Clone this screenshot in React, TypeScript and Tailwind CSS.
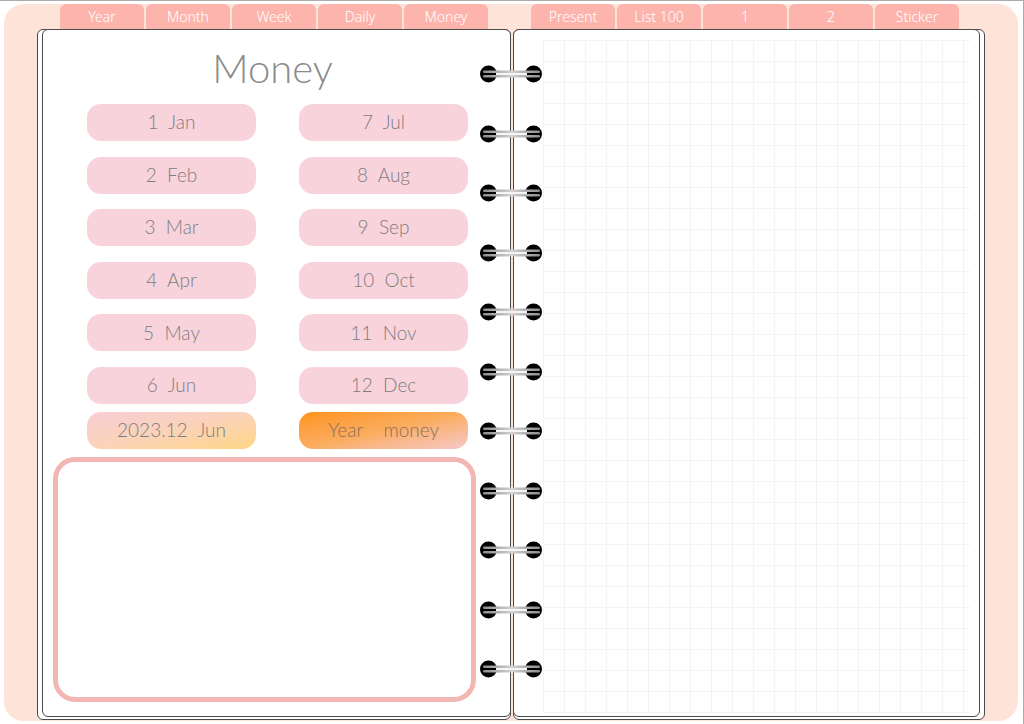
import React from "react";

const leftTabs = ["Year", "Month", "Week", "Daily", "Money"];
const rightTabs = ["Present", "List 100", "1", "2", "Sticker"];

const months = [
  ["1  Jan", "7  Jul"],
  ["2  Feb", "8  Aug"],
  ["3  Mar", "9  Sep"],
  ["4  Apr", "10  Oct"],
  ["5  May", "11  Nov"],
  ["6  Jun", "12  Dec"],
];

const Ring: React.FC = () => (
  <svg width="64" height="20" viewBox="0 0 64 20" className="block">
    <defs>
      <linearGradient id="bar" x1="0" x2="1" y1="0" y2="0">
        <stop offset="0" stopColor="#8c8c8c" />
        <stop offset="0.5" stopColor="#d2d2d2" />
        <stop offset="1" stopColor="#8c8c8c" />
      </linearGradient>
    </defs>
    <circle cx="8.5" cy="10" r="8.5" fill="#000" />
    <circle cx="53.5" cy="10" r="8.5" fill="#000" />
    <rect x="3" y="6.5" width="57" height="2.5" rx="1.2" fill="url(#bar)" />
    <rect x="3" y="11" width="57" height="2.5" rx="1.2" fill="url(#bar)" />
    <rect x="16" y="9" width="31" height="2" fill="#f6f6f6" />
  </svg>
);

const Tab: React.FC<{ label: string }> = ({ label }) => (
  <div className="w-[84px] h-[25px] rounded-t-[6px] bg-[#fdb4ad] text-white text-[14px] leading-[25px] text-center">
    {label}
  </div>
);

const MonthButton: React.FC<{ label: string }> = ({ label }) => (
  <button className="h-[37px] w-[169px] rounded-[14px] bg-[#f8d3dc] text-[#7e7e7e] text-[19px] font-light whitespace-pre">
    {label}
  </button>
);

export default function App() {
  return (
    <div className="w-[1024px] h-[724px] bg-white border-t border-r border-[#ababab] overflow-hidden font-['Lato','Noto_Sans',sans-serif]">
      <div className="ml-[4px] mt-[3px] w-[1014px] h-[717px] rounded-[20px] bg-[#fee3d9] flex flex-col">
        {/* tabs */}
        <div className="flex h-[25px] pl-[56px] font-['Noto_Sans',sans-serif] font-light">
          <div className="flex gap-[2px]">
            {leftTabs.map((t) => (
              <Tab key={t} label={t} />
            ))}
          </div>
          <div className="flex gap-[2px] ml-[43px]">
            {rightTabs.map((t) => (
              <Tab key={t} label={t} />
            ))}
          </div>
        </div>

        {/* pages */}
        <div className="relative flex gap-[2px] pl-[33px]">
          {/* left page */}
          <div className="w-[474px] h-[691px] rounded-[6px] border border-[#4a4a4a] bg-white pl-[4px] pb-[1px]">
            <div className="h-full -mt-px -mr-px rounded-[6px] border border-[#4a4a4a] bg-white flex flex-col">
              <div className="mt-[14px] h-[48px] leading-[48px] text-[40px] font-light text-[#8a8a8a] text-center pr-[8px]">
                Money
              </div>
              <div className="mt-[12px] pl-[44px] grid grid-cols-[169px_169px] gap-x-[43px] gap-y-[15.6px]">
                {months.map(([a, b]) => (
                  <React.Fragment key={a}>
                    <MonthButton label={a} />
                    <MonthButton label={b} />
                  </React.Fragment>
                ))}
              </div>
              <div className="mt-[8px] pl-[44px] flex gap-x-[43px]">
                <button className="h-[37px] w-[169px] rounded-[14px] bg-linear-to-br from-[#f8cdd6] via-[#fbd3b8] to-[#fed684] text-[#7e7e7e] text-[19px] font-light whitespace-pre">
                  2023.12  Jun
                </button>
                <button className="h-[37px] w-[169px] rounded-[14px] bg-linear-to-br from-[#ff9210] via-[#fbad5e] to-[#f6c8c8] text-[#8a6f5e] text-[19px] font-light whitespace-pre">
                  Year    money
                </button>
              </div>
              <div className="mt-[8px] ml-[10px] w-[423px] h-[245px] rounded-[22px] border-[5px] border-[#f3b7b3] bg-white" />
            </div>
          </div>

          {/* right page */}
          <div className="w-[472px] h-[691px] rounded-[6px] border border-[#4a4a4a] bg-white pr-[4px] pb-[1px]">
            <div className="h-full -mt-px -ml-px rounded-[6px] border border-[#4a4a4a] bg-white">
              <div className="ml-[29px] mt-[10px] w-[427px] h-[673px] bg-[linear-gradient(#f3f3f3_1px,transparent_1px),linear-gradient(90deg,#f3f3f3_1px,transparent_1px)] bg-[size:21px_21px]" />
            </div>
          </div>

          {/* spiral rings */}
          <div className="absolute left-[476px] top-[35px] flex flex-col gap-[39.5px]">
            {Array.from({ length: 11 }).map((_, i) => (
              <Ring key={i} />
            ))}
          </div>
        </div>
      </div>
    </div>
  );
}
